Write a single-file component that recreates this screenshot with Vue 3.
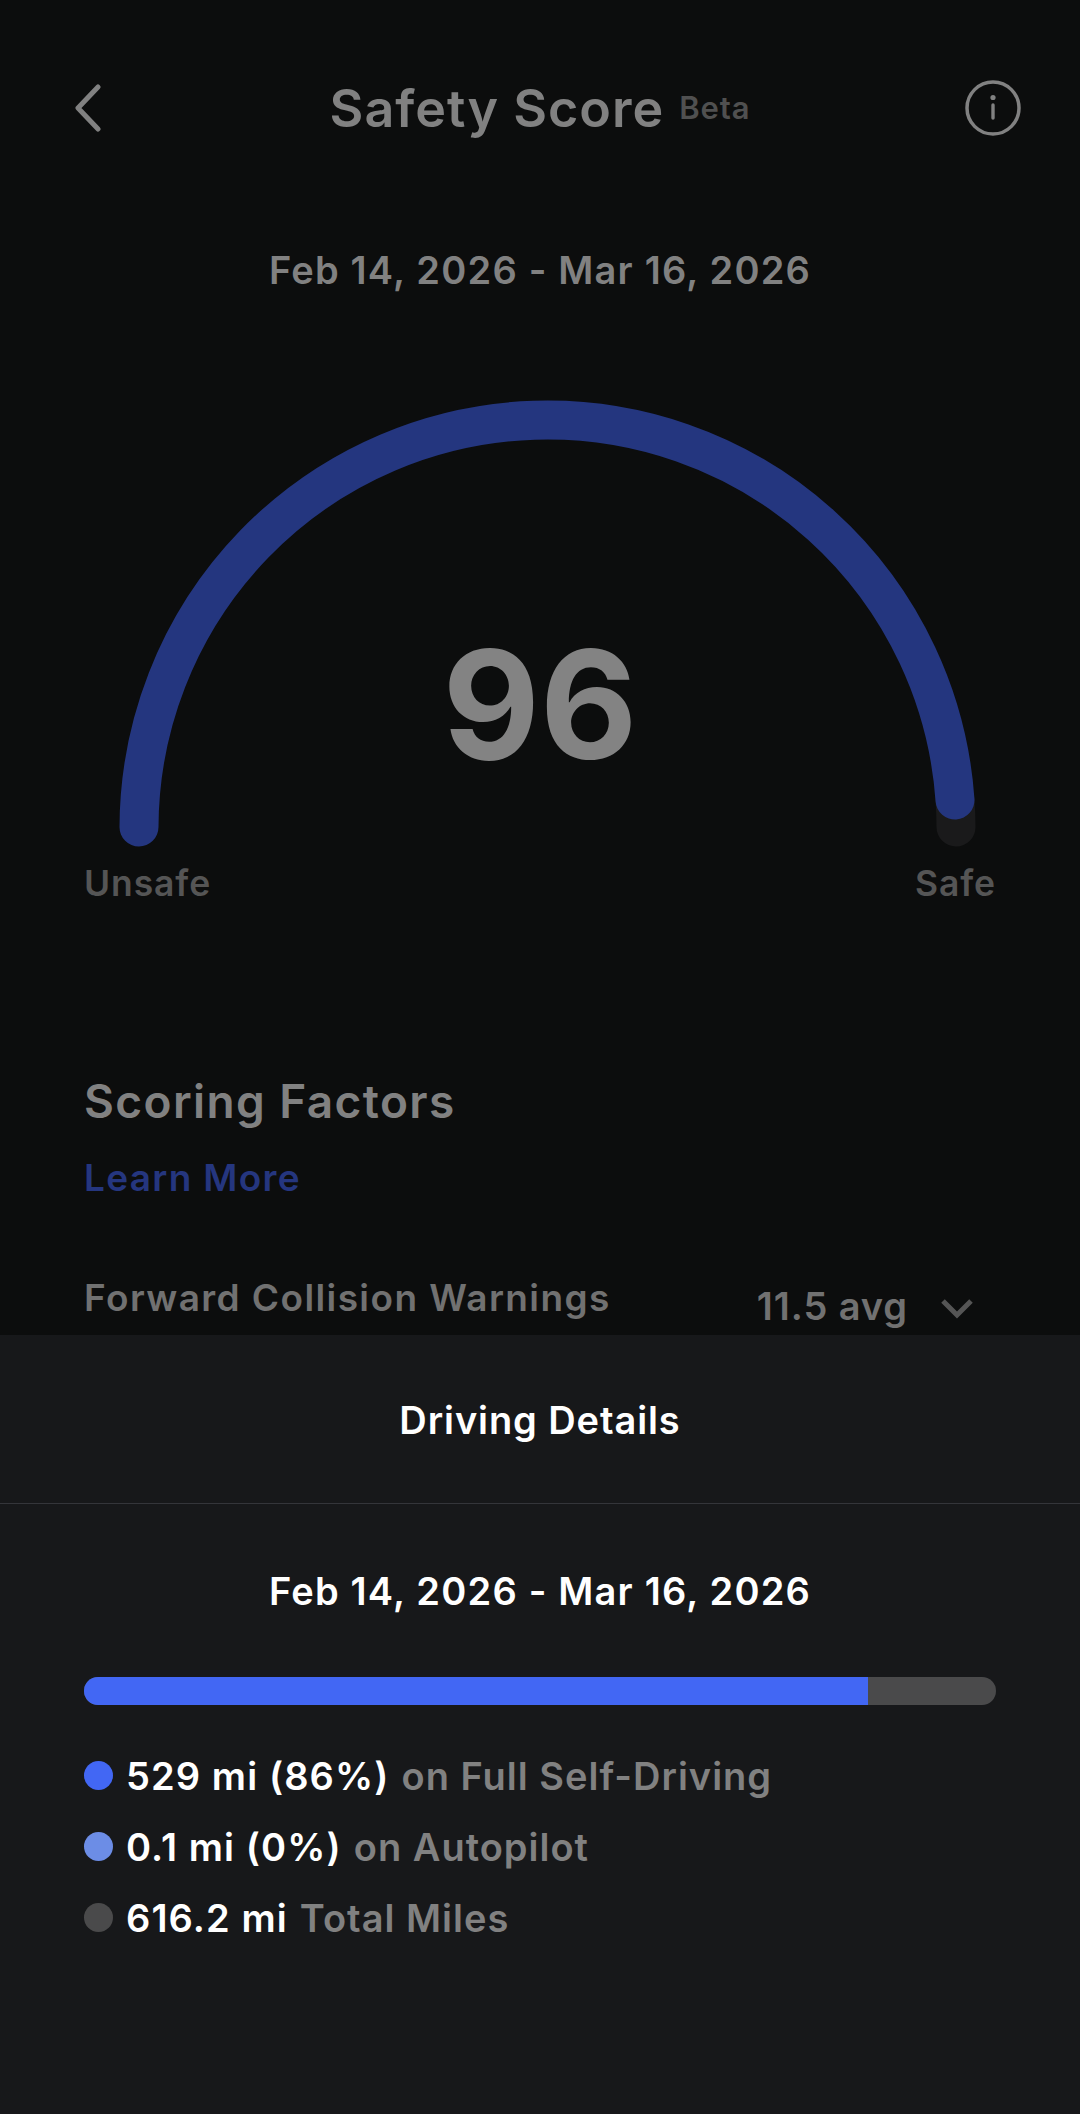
<script setup>
const rows = [
  { color: '#4267f4', strong: '529 mi (86%)', rest: 'on Full Self-Driving' },
  { color: '#6c8de6', strong: '0.1 mi (0%)', rest: 'on Autopilot' },
  { color: '#4a4a4b', strong: '616.2 mi', rest: 'Total Miles' },
]
</script>

<template>
  <div class="page">
    <section class="top">
      <header class="header">
        <svg class="back" width="30" height="48" viewBox="0 0 30 48"><path d="M26 3 L6 24 L26 45" fill="none" stroke="#818181" stroke-width="5" stroke-linecap="round" stroke-linejoin="round"/></svg>
        <div class="title"><span class="title-main">Safety Score</span><span class="beta">Beta</span></div>
        <svg class="info" width="56" height="56" viewBox="0 0 56 56">
          <circle cx="28" cy="28" r="26" fill="none" stroke="#818181" stroke-width="3.5"/>
          <circle cx="28" cy="17.5" r="2.6" fill="#818181"/>
          <path d="M28 25 V38" stroke="#818181" stroke-width="3.4" stroke-linecap="round"/>
        </svg>
      </header>
      <p class="range dim">Feb 14, 2026 - Mar 16, 2026</p>
      <div class="gauge">
        <svg width="1080" height="480" viewBox="0 380 1080 480">
          <path d="M955 800 A408.5 408.5 0 0 1 956 827" fill="none" stroke="#1a1a1b" stroke-width="39" stroke-linecap="round"/>
          <path d="M139 827 A408.5 408.5 0 0 1 955 800" fill="none" stroke="#24367f" stroke-width="39" stroke-linecap="round"/>
        </svg>
        <div class="score">96</div>
      </div>
      <div class="ends"><span>Unsafe</span><span>Safe</span></div>
      <h2 class="factors">Scoring Factors</h2>
      <a class="learn">Learn More</a>
      <div class="factor">
        <span class="factor-name">Forward Collision Warnings</span>
        <span class="factor-val">11.5 avg
          <svg class="chev" width="34" height="20" viewBox="0 0 34 20"><path d="M3 2 L17 16 L31 2" fill="none" stroke="#555" stroke-width="5"/></svg>
        </span>
      </div>
    </section>
    <section class="sheet">
      <div class="sheet-head">Driving Details</div>
      <div class="sheet-body">
        <p class="range white">Feb 14, 2026 - Mar 16, 2026</p>
        <div class="bar"><div class="fill"></div></div>
        <ul class="list">
          <li v-for="r in rows" :key="r.strong">
            <i class="dot" :style="{ background: r.color }"></i>
            <span class="strong">{{ r.strong }}</span>
            <span class="rest">{{ r.rest }}</span>
          </li>
        </ul>
      </div>
    </section>
  </div>
</template>

<style scoped>
.page { width: 1080px; height: 2114px; background: #0c0d0d; font-family: Inter, "Liberation Sans", sans-serif; font-weight: 600; letter-spacing: 1.1px; display: flex; flex-direction: column; overflow: hidden; }
.top { height: 1335px; flex: none; display: flex; flex-direction: column; overflow: hidden; }
.header { height: 56px; margin-top: 80px; padding: 0 59px 0 72px; display: flex; align-items: center; justify-content: space-between; }
.back { flex: none; }
.title { display: flex; align-items: baseline; gap: 15px; color: #818181; margin: 2px 0 0 13px; }
.title-main { font-size: 52px; font-weight: 600; line-height: 56px; letter-spacing: 1px; }
.beta { font-size: 31px; color: #505050; position: relative; top: -8px; letter-spacing: 0.9px; }
.range { margin: 0; text-align: center; font-size: 38px; line-height: 46px; letter-spacing: 1.2px; }
.dim { color: #818181; margin-top: 111px; }
.white { color: #fff; }
.gauge { position: relative; height: 480px; margin-top: 87px; flex: none; }
.gauge svg { display: block; }
.score { position: absolute; left: 0; right: 0; top: 245px; text-align: center; font-size: 150px; line-height: 160px; font-weight: 650; letter-spacing: 0; color: #838383; }
.ends { display: flex; justify-content: space-between; padding: 0 84px; margin-top: 2px; color: #555; font-size: 35.5px; line-height: 44px; letter-spacing: 0.9px; }
.factors { margin: 167px 0 0 84px; color: #818181; font-size: 46px; line-height: 56px; font-weight: 600; letter-spacing: 1.4px; }
.learn { margin: 26px 0 0 84px; color: #25367f; font-size: 37px; line-height: 46px; letter-spacing: 1.3px; }
.factor { display: flex; justify-content: space-between; margin-top: 74px; padding: 0 84px; color: #717171; font-size: 37px; line-height: 46px; letter-spacing: 1.4px; }
.factor-val { display: flex; align-items: center; gap: 32px; margin-top: 8px; padding-right: 22px; font-size: 38px; letter-spacing: 0.9px; }
.chev { margin-top: 5px; }
.sheet { flex: 1; background: #17181a; display: flex; flex-direction: column; }
.sheet-head { height: 169px; flex: none; box-sizing: border-box; padding-top: 62px; text-align: center; color: #fff; font-size: 38px; line-height: 46px; font-weight: 600; letter-spacing: 0.9px; border-bottom: 1px solid #34353a; }
.sheet-body { padding: 64px 84px 0; }
.bar { height: 28px; margin-top: 63px; border-radius: 14px; background: #4a4a4b; overflow: hidden; }
.fill { width: 86%; height: 100%; background: #4267f4; }
.list { list-style: none; margin: 35px 0 0; padding: 0; }
.list li { display: flex; align-items: center; height: 71px; font-size: 38px; }
.dot { width: 29px; height: 29px; border-radius: 50%; flex: none; margin-right: 13px; }
.strong { color: #fff; }
.rest { color: #818181; margin-left: 12px; letter-spacing: 1px; }
</style>
